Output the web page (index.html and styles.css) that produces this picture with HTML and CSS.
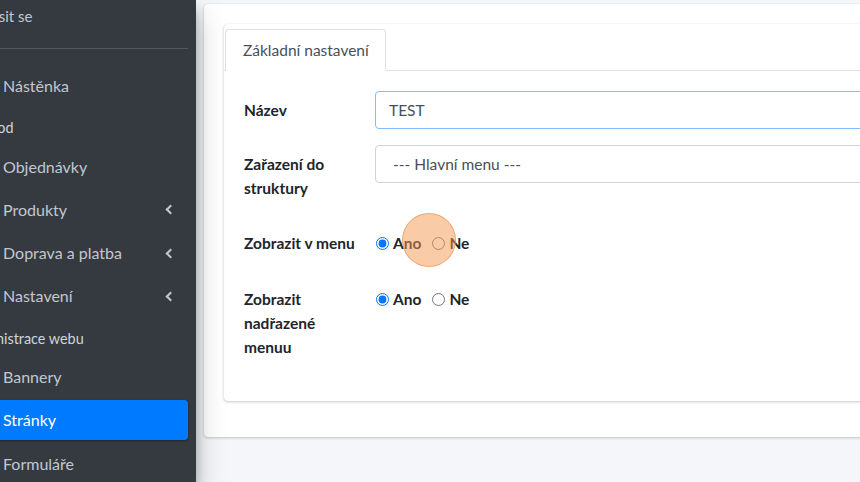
FILE: index.html
```html
<!DOCTYPE html>
<html lang="cs">
<head>
  <meta charset="UTF-8" />
  <title>Stránky - administrace</title>
  <link rel="stylesheet" href="styles.css">
</head>
<body>
  <aside class="sidebar">
    <div class="sidebar-inner">
      <div class="user-panel">
        <a href="#">Odhlásit se</a>
      </div>

      <ul class="nav">
        <li><a class="nav-link" href="#">Nástěnka</a></li>
        <li class="nav-header">Obchod</li>
        <li><a class="nav-link" href="#">Objednávky</a></li>
        <li><a class="nav-link" href="#">Produkty <span class="angle"></span></a></li>
        <li><a class="nav-link" href="#">Doprava a platba <span class="angle"></span></a></li>
        <li><a class="nav-link" href="#">Nastavení <span class="angle"></span></a></li>
        <li class="nav-header">Administrace webu</li>
        <li><a class="nav-link" href="#">Bannery</a></li>
        <li><a class="nav-link active" href="#">Stránky</a></li>
        <li><a class="nav-link" href="#">Formuláře</a></li>
      </ul>
    </div>
  </aside>

  <main class="content">
    <div class="card outer">
      <div class="card tabs-card">
        <div class="tabs">
          <a class="tab active" href="#">Základní nastavení</a>
        </div>

        <div class="card-body">
          <div class="form-row">
            <label class="col-label" for="nazev">Název</label>
            <input class="form-control focus" id="nazev" type="text" value="TEST">
          </div>

          <div class="form-row">
            <label class="col-label" for="struktura">Zařazení do struktury</label>
            <div class="form-control select" id="struktura">--- Hlavní menu ---</div>
          </div>

          <div class="form-row radio-row">
            <span class="col-label">Zobrazit v menu</span>
            <div class="radios">
              <label class="check"><input type="radio" name="menu" checked> Ano</label>
              <label class="check"><input type="radio" name="menu"> Ne</label>
              <span class="click-mark"></span>
            </div>
          </div>

          <div class="form-row radio-row">
            <span class="col-label">Zobrazit nadřazené menuu</span>
            <div class="radios">
              <label class="check"><input type="radio" name="parent" checked> Ano</label>
              <label class="check"><input type="radio" name="parent"> Ne</label>
            </div>
          </div>
        </div>
      </div>
    </div>
  </main>
</body>
</html>
```

FILE: styles.css
```css
* {
  box-sizing: border-box;
}
html, body {
  margin: 0;
  height: 100%;
}
body {
  font-family: Lato, 'Liberation Sans', sans-serif;
  font-size: 16px;
  line-height: 24px;
  color: #212529;
  background: #f4f6f9;
  display: flex;
  overflow: hidden;
}
a {
  text-decoration: none;
}

/* levy panel */
.sidebar {
  width: 196px;
  flex-shrink: 0;
  background: #343a40;
  overflow: hidden;
  position: relative;
  z-index: 2;
  box-shadow: 0 14px 28px rgba(0,0,0,0.25), 0 10px 10px rgba(0,0,0,0.22);
}
.sidebar-inner {
  width: 250px;
  margin-left: -54px;
  padding: 0 8px;
}
.user-panel {
  height: 49px;
  border-bottom: 1px solid #4f5962;
  padding: 4px 0 0 5px;
}
.user-panel a {
  color: #c2c7d0;
  font-size: 15px;
}
.nav {
  list-style: none;
  margin: 0;
  padding: 17px 0 0;
}
.nav-link {
  display: flex;
  align-items: center;
  justify-content: space-between;
  color: #c2c7d0;
  padding: 8px 16px 8px 49px;
  margin-bottom: 3.2px;
  border-radius: 4px;
  height: 40px;
}
.nav-link.active {
  background: #007bff;
  color: #fff;
  box-shadow: 0 1px 3px rgba(0,0,0,0.12), 0 1px 2px rgba(0,0,0,0.24);
}
.nav-header {
  font-size: 14.4px;
  color: #d0d4db;
  padding: 8px 16px 8px 9px;
  line-height: 21.6px;
}
.angle {
  width: 7px;
  height: 7px;
  border-left: 2.5px solid #c2c7d0;
  border-bottom: 2.5px solid #c2c7d0;
  transform: rotate(45deg);
  margin-right: -2px;
}

/* obsah */
.content {
  flex: 1;
  padding: 4px 0 0 8px;
  min-width: 0;
}
.card {
  background: #fff;
  border-radius: 4px;
  box-shadow: 0 0 1px rgba(0,0,0,0.125), 0 1px 3px rgba(0,0,0,0.2);
}
.outer {
  width: 900px;
  padding: 20px;
}
.tabs-card {
  margin-bottom: 16px;
}
.tabs {
  display: flex;
  padding-top: 5px;
  border-bottom: 1px solid #dee2e6;
}
.tab {
  display: block;
  color: #495057;
  padding: 8px 16px 8px 17px;
  margin-bottom: -1px;
  margin-left: 1px;
  border: 1px solid #dee2e6;
  border-bottom-color: #fff;
  border-radius: 4px 4px 0 0;
  background: #fff;
  font-size: 15.5px;
}
.card-body {
  padding: 20px;
}
.form-row {
  display: flex;
  margin-bottom: 16px;
}
.col-label {
  width: 131px;
  flex-shrink: 0;
  padding: 7px 15px 7px 0;
  font-weight: 700;
  font-size: 15.5px;
}
.form-control {
  flex: 1;
  height: 38px;
  padding: 6px 13px;
  font: inherit;
  font-size: 15.5px;
  color: #495057;
  border: 1px solid #ced4da;
  border-radius: 4px;
  background: #fff;
}
.form-control.focus {
  border-color: #80bdff;
  outline: none;
}
.select {
  padding-left: 17px;
}
.radio-row .col-label {
  padding-top: 8px;
  padding-bottom: 6px;
}
.radios {
  position: relative;
  display: flex;
  align-items: flex-start;
  padding: 8px 0;
}
.check {
  display: flex;
  align-items: center;
  font-weight: 700;
  font-size: 15.5px;
  margin-right: 10px;
}
.check input {
  width: 13px;
  height: 13px;
  margin: 0 4px 0 1px;
  accent-color: #0075ff;
}
.click-mark {
  position: absolute;
  left: 27px;
  top: -10px;
  width: 54px;
  height: 54px;
  border-radius: 50%;
  background: rgba(246, 152, 80, 0.5);
  border: 1.5px solid rgba(236, 150, 90, 0.7);
}
```
